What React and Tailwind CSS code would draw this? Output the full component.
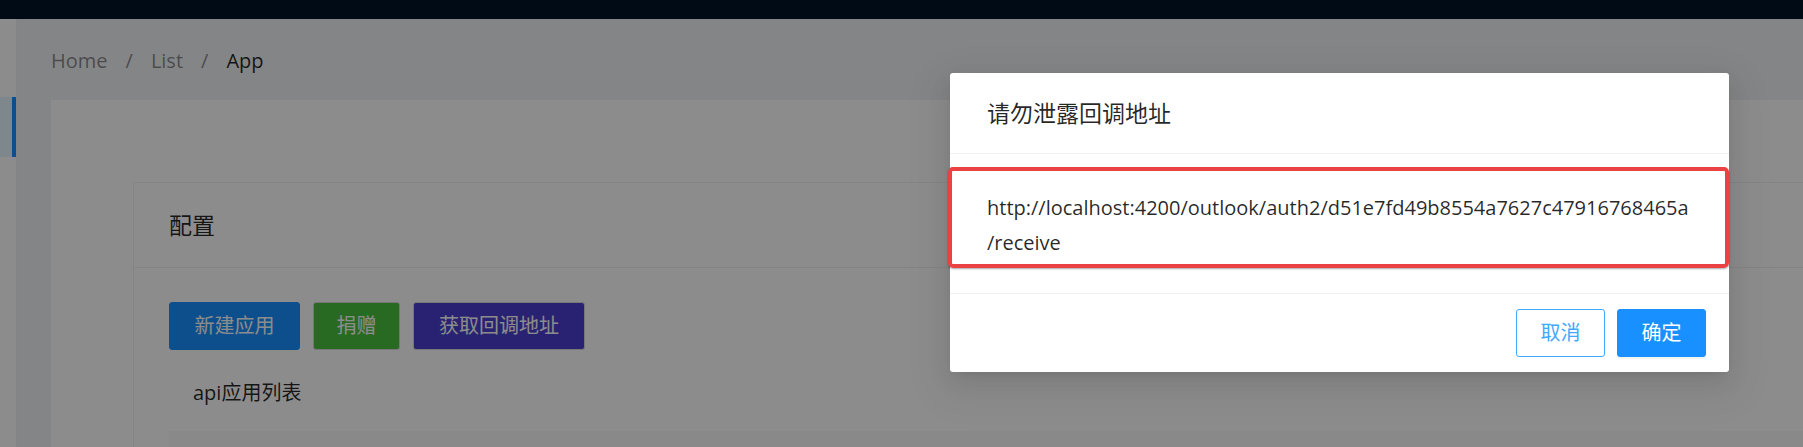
import React from "react";

const FONT = { fontFamily: "'Open Sans','Noto Sans CJK SC',sans-serif" };

function Breadcrumb() {
  const items = ["Home", "List", "App"];
  return (
    <div className="flex items-center h-[31px] leading-[31px] text-[20px]">
      {items.map((item, i) => (
        <React.Fragment key={item}>
          {i > 0 && <span className="mx-[18px] text-black/45">/</span>}
          <span className={i === items.length - 1 ? "text-black/85" : "text-black/45"}>
            {item}
          </span>
        </React.Fragment>
      ))}
    </div>
  );
}

function ConfigCard() {
  return (
    <div className="border border-[#f0f0f0] bg-white">
      <div className="h-[85px] px-[35px] flex items-center border-b border-[#f0f0f0] text-[23px] text-black/85">
        配置
      </div>
      <div className="pt-[34px] px-[35px]">
        <div className="flex gap-[13px]">
          <button className="h-[48px] w-[131px] rounded-[3px] bg-[#1890ff] border border-[#1890ff] text-white text-[20px]">
            新建应用
          </button>
          <button className="h-[48px] w-[87px] rounded-[3px] bg-[#4bc240] border border-[#d9d9d9] text-white text-[20px]">
            捐赠
          </button>
          <button className="h-[48px] w-[172px] rounded-[3px] bg-[#4c3ecf] border border-[#d9d9d9] text-white text-[20px]">
            获取回调地址
          </button>
        </div>
        <div className="mt-[27px] pl-[24px] h-[31px] leading-[31px] text-[20px] text-black/85">
          api应用列表
        </div>
        <div className="mt-[23px] h-[80px] bg-[#fafafa] border-b border-[#f0f0f0]" />
      </div>
    </div>
  );
}

function CallbackModal() {
  return (
    <div className="absolute left-[950px] top-[73px] w-[779px] bg-white rounded-[3px] shadow-[0_4px_9px_-6px_rgba(0,0,0,0.12),0_9px_23px_0_rgba(0,0,0,0.08),0_13px_40px_12px_rgba(0,0,0,0.05)]">
      <div className="h-[81px] px-[37px] flex items-center border-b border-[#f0f0f0] text-[23px] text-black/85">
        请勿泄露回调地址
      </div>
      <div className="pt-[36px] pb-[33px] px-[37px] text-[20px] leading-[35px] text-black/85">
        http://localhost:4200/outlook/auth2/d51e7fd49b8554a7627c47916768465a
        <br />
        /receive
      </div>
      <div className="border-t border-[#f0f0f0] pt-[15px] pb-[15px] pr-[23px] flex justify-end gap-[12px]">
        <button className="h-[48px] w-[89px] rounded-[3px] bg-white border border-[#40a9ff] text-[#40a9ff] text-[20px]">
          取消
        </button>
        <button className="h-[48px] w-[89px] rounded-[3px] bg-[#1890ff] border border-[#1890ff] text-white text-[20px] shadow-[0_2px_0_rgba(0,0,0,0.045)]">
          确定
        </button>
      </div>
      {/* annotation frame */}
      <div className="absolute left-[-2px] top-[94px] w-[781px] h-[101px] border-[4px] border-[#ea4242] rounded-[5px] shadow-[0_1px_2px_rgba(0,0,0,0.35)]" />
    </div>
  );
}

export default function App() {
  return (
    <div className="relative w-[1803px] h-[447px] overflow-hidden bg-[#f0f2f5]" style={FONT}>
      <div className="h-[19px] bg-[#001529]" />
      <div className="flex h-[428px]">
        <div className="w-[17px] shrink-0 bg-white pt-[78px] border-r border-[#f0f0f0]">
          <div className="h-[60px] flex">
            <div className="w-[13px] bg-[#e6f7ff]" />
            <div className="w-[4px] bg-[#1890ff]" />
          </div>
        </div>
        <div className="flex-1 pl-[34px] pt-[26px] overflow-hidden">
          <Breadcrumb />
          <div className="mt-[24px] w-[2000px] bg-white pl-[82px] pt-[82px] h-[400px]">
            <ConfigCard />
          </div>
        </div>
      </div>
      <div className="absolute inset-0 bg-black/45" />
      <CallbackModal />
    </div>
  );
}
